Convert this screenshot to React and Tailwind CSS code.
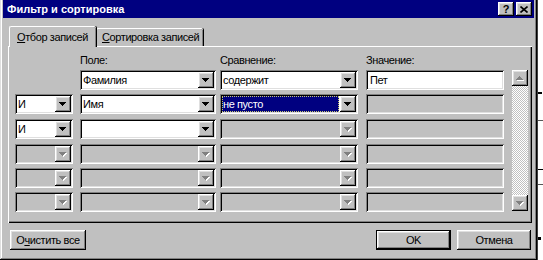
const RAISED =
  'shadow-[inset_-1px_-1px_0_#000,inset_1px_1px_0_#fff,inset_-2px_-2px_0_#808080,inset_2px_2px_0_#dfdfdf]'
const SUNKEN =
  'shadow-[inset_1px_1px_0_#808080,inset_-1px_-1px_0_#fff,inset_2px_2px_0_#000,inset_-2px_-2px_0_#dfdfdf]'

const ROWS = [
  { gap: 'mt-0', op: null, field: ['Фамилия', true], cmp: ['содержит', true], val: ['Пет', true] },
  { gap: 'mt-[4px]', op: ['И', true], field: ['Имя', true], cmp: ['не пусто', true, true], val: ['', false] },
  { gap: 'mt-[5px]', op: ['И', true], field: ['', true], cmp: ['', false], val: ['', false] },
  { gap: 'mt-[5px]', op: ['', false], field: ['', false], cmp: ['', false], val: ['', false] },
  { gap: 'mt-[4px]', op: ['', false], field: ['', false], cmp: ['', false], val: ['', false] },
  { gap: 'mt-[4px]', op: ['', false], field: ['', false], cmp: ['', false], val: ['', false] },
]

function Arrow({ on, up }) {
  const rows = up ? [3, 2, 1, 0] : [0, 1, 2, 3]
  return (
    <svg width="8" height="5" viewBox="0 0 8 5" shapeRendering="crispEdges">
      {!on &&
        rows.map((r, i) => (
          <rect key={'s' + i} x={r + 1} y={i + 1} width={7 - r * 2} height="1" fill="#fff" />
        ))}
      {rows.map((r, i) => (
        <rect key={i} x={r} y={i} width={7 - r * 2} height="1" fill={on ? '#000' : '#808080'} />
      ))}
    </svg>
  )
}

function Combo({ w, text, on, selected }) {
  return (
    <div className={`flex h-[20px] p-[2px] ${w} ${SUNKEN} ${on ? 'bg-white' : 'bg-[#c0c0c0]'}`}>
      <div className="flex-1 flex items-center min-w-0 pr-[1px]">
        {selected ? (
          <div className="h-full flex-1 flex items-center bg-[#000080] text-white pl-[1px] outline outline-1 outline-dotted outline-[#c8c870] -outline-offset-1">
            {text}
          </div>
        ) : (
          <span className="pl-[1px]">{text}</span>
        )}
      </div>
      <div className={`w-[16px] h-[16px] bg-[#c0c0c0] flex items-center justify-center ${RAISED}`}>
        <Arrow on={on} />
      </div>
    </div>
  )
}

function Field({ text, on }) {
  return (
    <div className={`flex items-center h-[20px] w-[138px] px-[4px] ${SUNKEN} ${on ? 'bg-white' : 'bg-[#c0c0c0]'}`}>
      {text}
    </div>
  )
}

function Button({ children, className, def }) {
  return (
    <div className={`h-[20px] ${className} ${def ? 'border border-black' : ''}`}>
      <div className={`h-full w-full bg-[#c0c0c0] flex items-center justify-center ${RAISED}`}>{children}</div>
    </div>
  )
}

export default function App() {
  return (
    <div className="flex w-[543px] h-[260px] bg-white text-[11px] tracking-[-0.4px] whitespace-nowrap text-black font-['Liberation_Sans',Arial,sans-serif] leading-none overflow-hidden">
      <div className="w-[538px] h-[260px] bg-[#c0c0c0] px-[3px] shadow-[inset_-1px_-1px_0_#000,inset_1px_0_0_#dfdfdf,inset_-2px_-2px_0_#808080,inset_2px_0_0_#fff]">
        {/* title bar */}
        <div className="h-[18px] bg-[#000080] flex items-center pl-[4px] pr-[2px]">
          <span className="font-bold text-white tracking-[0px] flex-1">Фильтр и сортировка</span>
          <div className={`w-[16px] h-[14px] bg-[#c0c0c0] flex items-center justify-center font-bold text-[11px] ${RAISED}`}>?</div>
          <div className={`ml-[2px] w-[16px] h-[14px] bg-[#c0c0c0] flex items-center justify-center ${RAISED}`}>
            <svg width="8" height="7" viewBox="0 0 8 7">
              <path d="M0.5 0.5 7.5 6.5M7.5 0.5 0.5 6.5" stroke="#000" strokeWidth="1.6" />
            </svg>
          </div>
        </div>

        {/* tabs */}
        <div className="flex items-end mt-[8px] pl-[6px]">
          <div className="relative z-10 -mb-px h-[21px] w-[87px] bg-[#c0c0c0] border-t border-l border-white rounded-tl-[2px] rounded-tr-[2px] shadow-[inset_-1px_0_0_#808080,1px_0_0_#000] flex items-center pl-[7px]">
            <span>
              <span className="underline">О</span>тбор записей
            </span>
          </div>
          <div className="h-[18px] w-[107px] border-t border-l border-white rounded-tl-[2px] rounded-tr-[2px] shadow-[inset_-1px_0_0_#808080,1px_0_0_#000] flex items-center pl-[5px]">
            <span>
              <span className="underline">С</span>ортировка записей
            </span>
          </div>
        </div>

        {/* panel */}
        <div className="ml-[5px] w-[524px] h-[177px] pt-[8px] pl-[7px] shadow-[inset_1px_1px_0_#fff,inset_-1px_-1px_0_#000,inset_-2px_-2px_0_#808080]">
          <div className="flex h-[13px] items-center">
            <span className="ml-[65px] w-[140px]">Поле:</span>
            <span className="w-[146px]">Сравнение:</span>
            <span>Значение:</span>
          </div>
          <div className="flex mt-[3px]">
            <div className="flex flex-col">
              {ROWS.map((r, i) => (
                <div key={i} className={`flex ${r.gap}`}>
                  {r.op ? <Combo w="w-[58px]" text={r.op[0]} on={r.op[1]} /> : <div className="w-[58px]" />}
                  <div className="ml-[7px]">
                    <Combo w="w-[136px]" text={r.field[0]} on={r.field[1]} />
                  </div>
                  <div className="ml-[4px]">
                    <Combo w="w-[138px]" text={r.cmp[0]} on={r.cmp[1]} selected={r.cmp[2]} />
                  </div>
                  <div className="ml-[8px]">
                    <Field text={r.val[0]} on={r.val[1]} />
                  </div>
                </div>
              ))}
            </div>
            {/* scrollbar */}
            <div className="ml-[8px] w-[16px] h-[141px] flex flex-col justify-between bg-[repeating-conic-gradient(#fff_0_25%,#c0c0c0_0_50%)] bg-[length:2px_2px]">
              <div className={`w-[16px] h-[16px] bg-[#c0c0c0] flex items-center justify-center ${RAISED}`}>
                <Arrow on={false} up />
              </div>
              <div className={`w-[16px] h-[16px] bg-[#c0c0c0] flex items-center justify-center ${RAISED}`}>
                <Arrow on={false} />
              </div>
            </div>
          </div>
        </div>

        {/* buttons */}
        <div className="flex mt-[7px] pl-[7px]">
          <Button className="w-[76px]">
            <span>
              О<span className="underline">ч</span>истить все
            </span>
          </Button>
          <Button className="ml-[290px] w-[75px]" def>
            OK
          </Button>
          <Button className="ml-[6px] w-[74px]">Отмена</Button>
        </div>
      </div>
      <div className="flex-1 flex flex-col border-l border-[#404040]">
        <div className="mt-[92px] h-[2px] w-[4px] bg-black" />
        <div className="mt-[26px] h-[1px] w-[5px] bg-[#555]" />
        <div className="mt-[48px] h-[1px] w-[5px] bg-black" />
        <div className="mt-[14px] h-[1px] w-[5px] bg-[#555]" />
        <div className="mt-[52px] h-[3px] w-[3px] bg-black" />
      </div>
    </div>
  )
}
